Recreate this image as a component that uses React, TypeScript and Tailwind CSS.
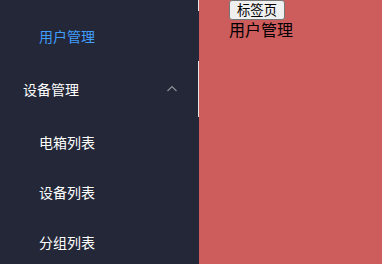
const cjk = { fontFamily: '"Noto Sans CJK SC", "Noto Sans", sans-serif' };

const children = ["电箱列表", "设备列表", "分组列表"];

export default function App() {
  return (
    <div className="flex h-screen overflow-hidden" style={cjk}>
      <aside className="flex w-[199px] shrink-0 flex-col overflow-hidden bg-[#232737] text-[14px]">
        <div className="h-[11px] shrink-0 border-r border-[#e6e6e6]" />
        <div className="flex h-[50px] shrink-0 items-center pl-[39px] text-[#409eff]">用户管理</div>
        <div className="flex h-[56px] shrink-0 items-center justify-between border-r border-[#e6e6e6] pl-[23px] pr-[20px] text-white">
          <span>设备管理</span>
          <svg width="12" height="12" viewBox="0 0 12 12" className="text-[#909399]">
            <path d="M1.5 8 L6 3.5 L10.5 8" fill="none" stroke="currentColor" strokeWidth="1.1" />
          </svg>
        </div>
        {children.map((t) => (
          <div key={t} className="flex h-[50px] shrink-0 items-center pl-[39px] text-white">
            {t}
          </div>
        ))}
      </aside>
      <main className="flex-1 bg-[#cd5c5c] pl-[30px] text-black">
        <button className="block rounded-[3px] border border-[#767676] bg-[#efefef] px-[7px] text-[13.33px] leading-[18px]">
          标签页
        </button>
        <div className="text-[16px] leading-[18px]">用户管理</div>
      </main>
    </div>
  );
}
